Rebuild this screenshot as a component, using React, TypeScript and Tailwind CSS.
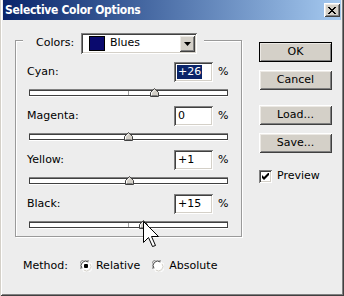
const raised =
  "shadow-[inset_1px_1px_0_#ffffff,inset_-1px_-1px_0_#404040,inset_2px_2px_0_#ece9e4,inset_-2px_-2px_0_#808080]";
const sunken =
  "shadow-[inset_1px_1px_0_#808080,inset_-1px_-1px_0_#ffffff,inset_2px_2px_0_#404040,inset_-2px_-2px_0_#d4d0c8]";

const rows = [
  { label: "Cyan:", value: 26, selected: true, tick: true },
  { label: "Magenta:", value: 0, selected: false, tick: false },
  { label: "Yellow:", value: 1, selected: false, tick: false },
  { label: "Black:", value: 15, selected: false, tick: true },
];

function fmt(v: number) {
  return v > 0 ? `+${v}` : `${v}`;
}

function Thumb() {
  return (
    <svg width="9" height="9" viewBox="0 0 9 9" className="block">
      <polygon points="0.5,8.5 0.5,4.5 4.5,0.5 8.5,4.5 8.5,8.5" fill="#d4d0c8" stroke="#404040" />
      <polyline points="1.5,7.5 1.5,4.9 4.5,1.9" fill="none" stroke="#ffffff" />
      <line x1="1.5" y1="7.5" x2="7.5" y2="7.5" stroke="#808080" />
    </svg>
  );
}

function Slider({ value, tick }: { value: number; tick: boolean }) {
  // track is 199px wide, centre at 99
  const left = 99 + Math.round(value * 0.99) - 4;
  return (
    <div className="relative ml-[13px] w-[199px] h-[10px] flex items-center">
      <div className="w-full h-[6px] bg-white border border-[#404040] shadow-[0_-1px_0_#808080,0_1px_0_#ffffff]" />
      {tick && <div className="absolute left-[99px] top-[3px] w-px h-[4px] bg-[#a0a0a0]" />}
      <div className="absolute top-0" style={{ left }}>
        <Thumb />
      </div>
    </div>
  );
}

function Row({ label, value, selected, tick }: (typeof rows)[number]) {
  return (
    <div className="flex flex-col gap-[6px]">
      <div className="flex items-center h-[20px] pl-[11px] pr-[12px]">
        <span className="flex-1 text-black pt-px">{label}</span>
        <div className={`w-[39px] h-[20px] bg-white flex items-center pl-[3px] ${sunken}`}>
          {selected ? (
            <span className="bg-[#0a246a] text-white leading-[14px] px-px">{fmt(value)}</span>
          ) : (
            <span className="pl-px">{fmt(value)}</span>
          )}
        </div>
        <span className="ml-[5px] w-[11px]">%</span>
      </div>
      <Slider value={value} tick={tick} />
    </div>
  );
}

function Button({ label, primary }: { label: string; primary?: boolean }) {
  return (
    <div
      className={`w-[73px] h-[20px] bg-[#d4d0c8] flex items-center justify-center ${raised} ${
        primary ? "outline outline-1 outline-black -outline-offset-1" : ""
      }`}
    >
      {label}
    </div>
  );
}

function Radio({ on }: { on: boolean }) {
  return (
    <svg width="12" height="12" viewBox="0 0 12 12" className="block">
      <circle cx="6" cy="6" r="5.5" fill="#ffffff" />
      <path d="M1.2,9 A5.5,5.5 0 0 1 9,1.2" fill="none" stroke="#808080" />
      <path d="M2,8.3 A4.5,4.5 0 0 1 8.3,2" fill="none" stroke="#404040" />
      <path d="M10.8,3 A5.5,5.5 0 0 1 3,10.8" fill="none" stroke="#ffffff" />
      <path d="M10,3.7 A4.5,4.5 0 0 1 3.7,10" fill="none" stroke="#d4d0c8" />
      {on && <rect x="4" y="4" width="4" height="4" rx="1" fill="#000" />}
    </svg>
  );
}

export default function App() {
  return (
    <div className="w-[344px] h-[296px] bg-[#ededed] font-['DejaVu_Sans',sans-serif] text-[11px] text-black relative overflow-hidden px-[3px] pb-[3px] shadow-[inset_1px_0_0_#d4d0c8,inset_-1px_-1px_0_#404040,inset_2px_0_0_#ffffff,inset_-2px_-2px_0_#808080]">
      {/* title bar */}
      <div className="h-[20px] bg-linear-to-r from-[#0a246a] to-[#a6caf0] flex items-center pl-[2px] pr-[1px]">
        <span className="flex-1 text-white font-bold text-[12px] font-['DejaVu_Sans_Condensed','DejaVu_Sans',sans-serif] tracking-[-0.3px]">
          Selective Color Options
        </span>
        <div className={`w-[16px] h-[14px] bg-[#d4d0c8] flex items-center justify-center ${raised}`}>
          <svg width="8" height="7" viewBox="0 0 8 7" className="block">
            <path d="M0,0h2v1h1v1h2v-1h1v-1h2v1h-1v1h-1v1h-1v1h1v1h1v1h1v1h-2v-1h-1v-1h-2v1h-1v1h-2v-1h1v-1h1v-1h1v-1h-1v-1h-1v-1h-1z" fill="#000" />
          </svg>
        </div>
      </div>

      <div className="flex pl-[12px] pt-[20px]">
        {/* group box */}
        <div className="w-[227px] border border-[#9a9a9a] shadow-[inset_1px_1px_0_#ffffff,1px_1px_0_#ffffff] pb-[6px] flex flex-col">
          <div className="-mt-[8px] ml-[7px] w-[181px] h-[21px] bg-[#ededed] flex items-center pl-[13px]">
            <span className="w-[45px]">Colors:</span>
            <div className={`w-[116px] h-[21px] bg-white flex items-center pl-[8px] pr-[2px] ${sunken}`}>
              <div className="w-[16px] h-[15px] bg-[#0a0a6e] border border-black" />
              <span className="flex-1 pl-[5px]">Blues</span>
              <div className={`w-[16px] h-[17px] bg-[#d4d0c8] flex items-center justify-center ${raised}`}>
                <svg width="7" height="4" viewBox="0 0 7 4" className="block">
                  <path d="M0,0h7l-3.5,4z" fill="#000" />
                </svg>
              </div>
            </div>
          </div>
          <div className="mt-[8px] flex flex-col gap-[8px]">
            {rows.map((r) => (
              <Row key={r.label} {...r} />
            ))}
          </div>
        </div>

        {/* buttons */}
        <div className="ml-[17px] pt-[2px] flex flex-col">
          <Button label="OK" primary />
          <div className="mt-[8px]">
            <Button label="Cancel" />
          </div>
          <div className="mt-[15px]">
            <Button label="Load..." />
          </div>
          <div className="mt-[8px]">
            <Button label="Save..." />
          </div>
          <div className="mt-[15px] flex items-center">
            <div className={`w-[13px] h-[13px] bg-white flex items-center justify-center ${sunken}`}>
              <svg width="7" height="7" viewBox="0 0 7 7" className="block">
                <path d="M0,2v3l2,2l5,-5v-3l-5,5z" fill="#000" />
              </svg>
            </div>
            <span className="ml-[5px]">Preview</span>
          </div>
        </div>
      </div>

      {/* method */}
      <div className="mt-[22px] ml-[20px] flex items-center h-[13px] pt-px">
        <span>Method:</span>
        <div className="ml-[12px]">
          <Radio on />
        </div>
        <span className="ml-[4px]">Relative</span>
        <div className="ml-[12px]">
          <Radio on={false} />
        </div>
        <span className="ml-[5px]">Absolute</span>
      </div>

      {/* mouse pointer */}
      <svg width="16" height="27" viewBox="0 0 16 27" className="absolute left-[143px] top-[221px]">
        <path
          d="M0.5,0.5 L0.5,21.5 L5.5,16.5 L9.5,25.5 L12.5,24.5 L8.5,15.5 L15.5,15.5 Z"
          fill="#ffffff"
          stroke="#000000"
          strokeLinejoin="miter"
        />
      </svg>
    </div>
  );
}
